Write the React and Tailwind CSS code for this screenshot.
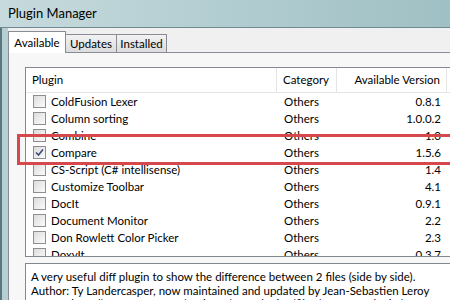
import React from "react";

const plugins = [
  { name: "ColdFusion Lexer", cat: "Others", ver: "0.8.1" },
  { name: "Column sorting", cat: "Others", ver: "1.0.0.2" },
  { name: "Combine", cat: "Others", ver: "1.0" },
  { name: "Compare", cat: "Others", ver: "1.5.6", checked: true },
  { name: "CS-Script (C# intellisense)", cat: "Others", ver: "1.4" },
  { name: "Customize Toolbar", cat: "Others", ver: "4.1" },
  { name: "DocIt", cat: "Others", ver: "0.9.1" },
  { name: "Document Monitor", cat: "Others", ver: "2.2" },
  { name: "Don Rowlett Color Picker", cat: "Others", ver: "2.3" },
  { name: "DoxyIt", cat: "Others", ver: "0.3.7" },
];

const CheckBox = ({ checked }) => (
  <div className="w-[13px] h-[13px] shrink-0 border border-[#8f8f8f] bg-gradient-to-br from-[#dcdcdc] to-[#fbfbfb] flex items-center justify-center">
    {checked && (
      <svg width="9" height="9" viewBox="0 0 9 9">
        <path d="M1 4.5 L3.5 7 L8 1.5" fill="none" stroke="#3c4a78" strokeWidth="1.6" />
      </svg>
    )}
  </div>
);

const Row = ({ p }) => (
  <div className="flex h-[17px] items-center">
    <div className="w-[251px] flex items-center pl-[7px] gap-[5px]">
      <CheckBox checked={p.checked} />
      <span>{p.name}</span>
    </div>
    <div className="w-[59px] pl-[7px]">{p.cat}</div>
    <div className="w-[105px] text-right">{p.ver}</div>
  </div>
);

const App = () => {
  return (
    <div className="w-[450px] h-[300px] overflow-hidden relative bg-[#a9c6ca] text-[11.5px] text-black font-['Lato',sans-serif]">
      <div className="h-[28px] flex items-center pl-[8px] text-[13px] bg-gradient-to-r from-[#c7dadd] via-[#b2cdd1] to-[#9fc0c4] border-b border-[#6f8a90]">
        Plugin Manager
      </div>
      <div className="flex h-[272px]">
        <div className="w-[8px] shrink-0 border-l-2 border-[#5e767c] bg-[#b6cfd3]" />
        <div className="flex-1 bg-[#f0f0f0] pt-[3px] flex flex-col">
          <div className="flex items-end h-[22px] relative z-10">
            <div className="h-[22px] w-[58px] bg-white border border-b-0 border-[#898c95] flex items-center justify-center">
              Available
            </div>
            <div className="h-[18px] w-[51px] mb-[1px] bg-gradient-to-b from-[#f2f2f2] to-[#dcdcdc] border border-l-0 border-b-0 border-[#898c95] flex items-center justify-center">
              Updates
            </div>
            <div className="h-[18px] w-[50px] mb-[1px] bg-gradient-to-b from-[#f2f2f2] to-[#dcdcdc] border border-l-0 border-b-0 border-[#898c95] flex items-center justify-center">
              Installed
            </div>
          </div>
          <div className="flex-1 -mt-[1px] border border-[#898c95] border-r-0 bg-[#f7f7f7] pl-[16px] pt-[14px] flex flex-col">
            <div className="w-[440px] h-[190px] bg-white border border-[#828790] border-r-0 overflow-hidden">
              <div className="flex h-[25px] items-center border-b border-[#e5e5e5]">
                <div className="w-[251px] pl-[6px] h-full flex items-center border-r border-[#e5e5e5]">Plugin</div>
                <div className="w-[60px] pl-[6px] h-full flex items-center border-r border-[#e5e5e5]">Category</div>
                <div className="w-[110px] pr-[6px] h-full flex items-center justify-end border-r border-[#e5e5e5]">Available Version</div>
              </div>
              {plugins.map((p) => (
                <Row key={p.name} p={p} />
              ))}
            </div>
            <div className="mt-[6px] w-[440px] flex-1 bg-white border border-[#828790] border-r-0 border-b-0 pl-[5px] pt-[6px] leading-[13.5px] whitespace-nowrap overflow-hidden">
              <div>A very useful diff plugin to show the difference between 2 files (side by side).</div>
              <div>Author: Ty Landercasper, now maintained and updated by Jean-Sebastien Leroy</div>
              <div>Source: http://sourceforge.net/projects/npp-plugins/files/ComparePlugin/Compare 1.5.6</div>
            </div>
          </div>
        </div>
      </div>
      <div className="absolute left-[17px] top-[134px] w-[450px] h-[31px] border-[3px] border-r-0 border-[#d6484b]" />
    </div>
  );
};

export default App;
